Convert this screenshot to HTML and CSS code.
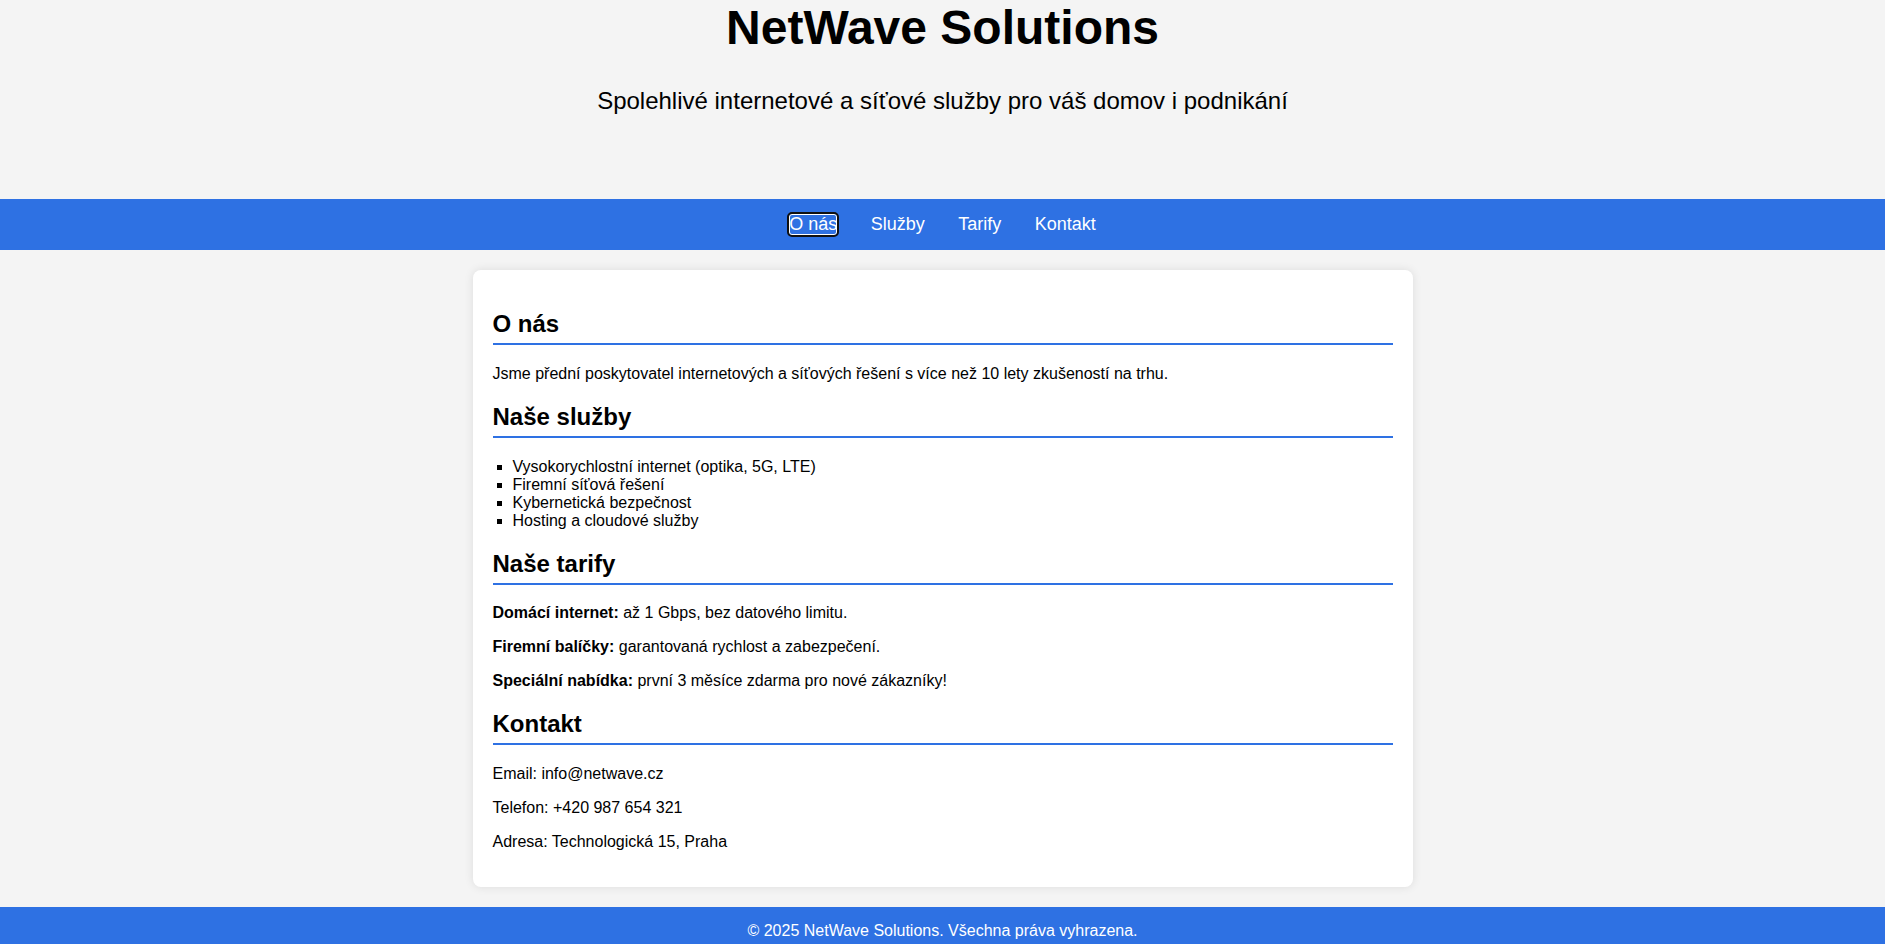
FILE: index.html
```html
<!DOCTYPE html>
<html lang="cs">
<head>
<meta charset="UTF-8">
<title>NetWave Solutions</title>
<link rel="stylesheet" href="styles.css">
</head>
<body>
<header class="site-header">
  <h1 class="site-title">NetWave Solutions</h1>
  <p class="tagline">Spolehlivé internetové a síťové služby pro váš domov i podnikání</p>
</header>
<nav class="main-nav">
  <a href="#onas" class="nav-link is-focused">O nás</a>
  <a href="#sluzby" class="nav-link">Služby</a>
  <a href="#tarify" class="nav-link">Tarify</a>
  <a href="#kontakt" class="nav-link">Kontakt</a>
</nav>
<main class="card">
  <section id="onas">
    <h2 class="section-title">O nás</h2>
    <p>Jsme přední poskytovatel internetových a síťových řešení s více než 10 lety zkušeností na trhu.</p>
  </section>
  <section id="sluzby">
    <h2 class="section-title">Naše služby</h2>
    <ul class="service-list">
      <li>Vysokorychlostní internet (optika, 5G, LTE)</li>
      <li>Firemní síťová řešení</li>
      <li>Kybernetická bezpečnost</li>
      <li>Hosting a cloudové služby</li>
    </ul>
  </section>
  <section id="tarify">
    <h2 class="section-title">Naše tarify</h2>
    <p><strong>Domácí internet:</strong> až 1 Gbps, bez datového limitu.</p>
    <p><strong>Firemní balíčky:</strong> garantovaná rychlost a zabezpečení.</p>
    <p><strong>Speciální nabídka:</strong> první 3 měsíce zdarma pro nové zákazníky!</p>
  </section>
  <section id="kontakt">
    <h2 class="section-title">Kontakt</h2>
    <p>Email: info@netwave.cz</p>
    <p>Telefon: +420 987 654 321</p>
    <p>Adresa: Technologická 15, Praha</p>
  </section>
</main>
<footer class="site-footer">
  <p>© 2025 NetWave Solutions. Všechna práva vyhrazena.</p>
</footer>
</body>
</html>
```
FILE: styles.css
```css
html, body {
  margin: 0;
  padding: 0;
}

body {
  background: #f4f4f4;
  color: #000;
  font-family: "Liberation Sans", Arial, sans-serif;
  font-size: 16px;
}

.site-header {
  text-align: center;
  padding: 0 0 60px;
}

.site-title {
  margin: 0;
  font-size: 48px;
  font-weight: bold;
}

.tagline {
  margin: 32px 0 24px;
  font-size: 24px;
}

.main-nav {
  background: #2e71e3;
  padding: 15px 0;
  display: flex;
  justify-content: center;
  gap: 33.5px;
}

.nav-link {
  color: #fff;
  text-decoration: none;
  font-size: 18px;
  border-radius: 3px;
}

.nav-link.is-focused {
  outline: 2px solid #101010;
  outline-offset: 0;
  box-shadow: inset 0 0 0 1px #fff;
}

.card {
  display: block;
  max-width: 900px;
  margin: 20px auto;
  padding: 20px;
  background: #fff;
  border-radius: 8px;
  box-shadow: 0 0 10px rgba(0, 0, 0, 0.1);
}

.section-title {
  font-size: 24px;
  margin: 19.92px 0;
  padding-bottom: 5px;
  border-bottom: 2px solid #2e71e3;
}

.card p {
  margin: 16px 0;
}

.service-list {
  list-style: square;
  margin: 16px 0;
  padding-left: 20px;
}

.site-footer {
  background: #2e71e3;
  color: #fff;
  text-align: center;
  padding: 15px 0;
}

.site-footer p {
  margin: 0;
}
```
